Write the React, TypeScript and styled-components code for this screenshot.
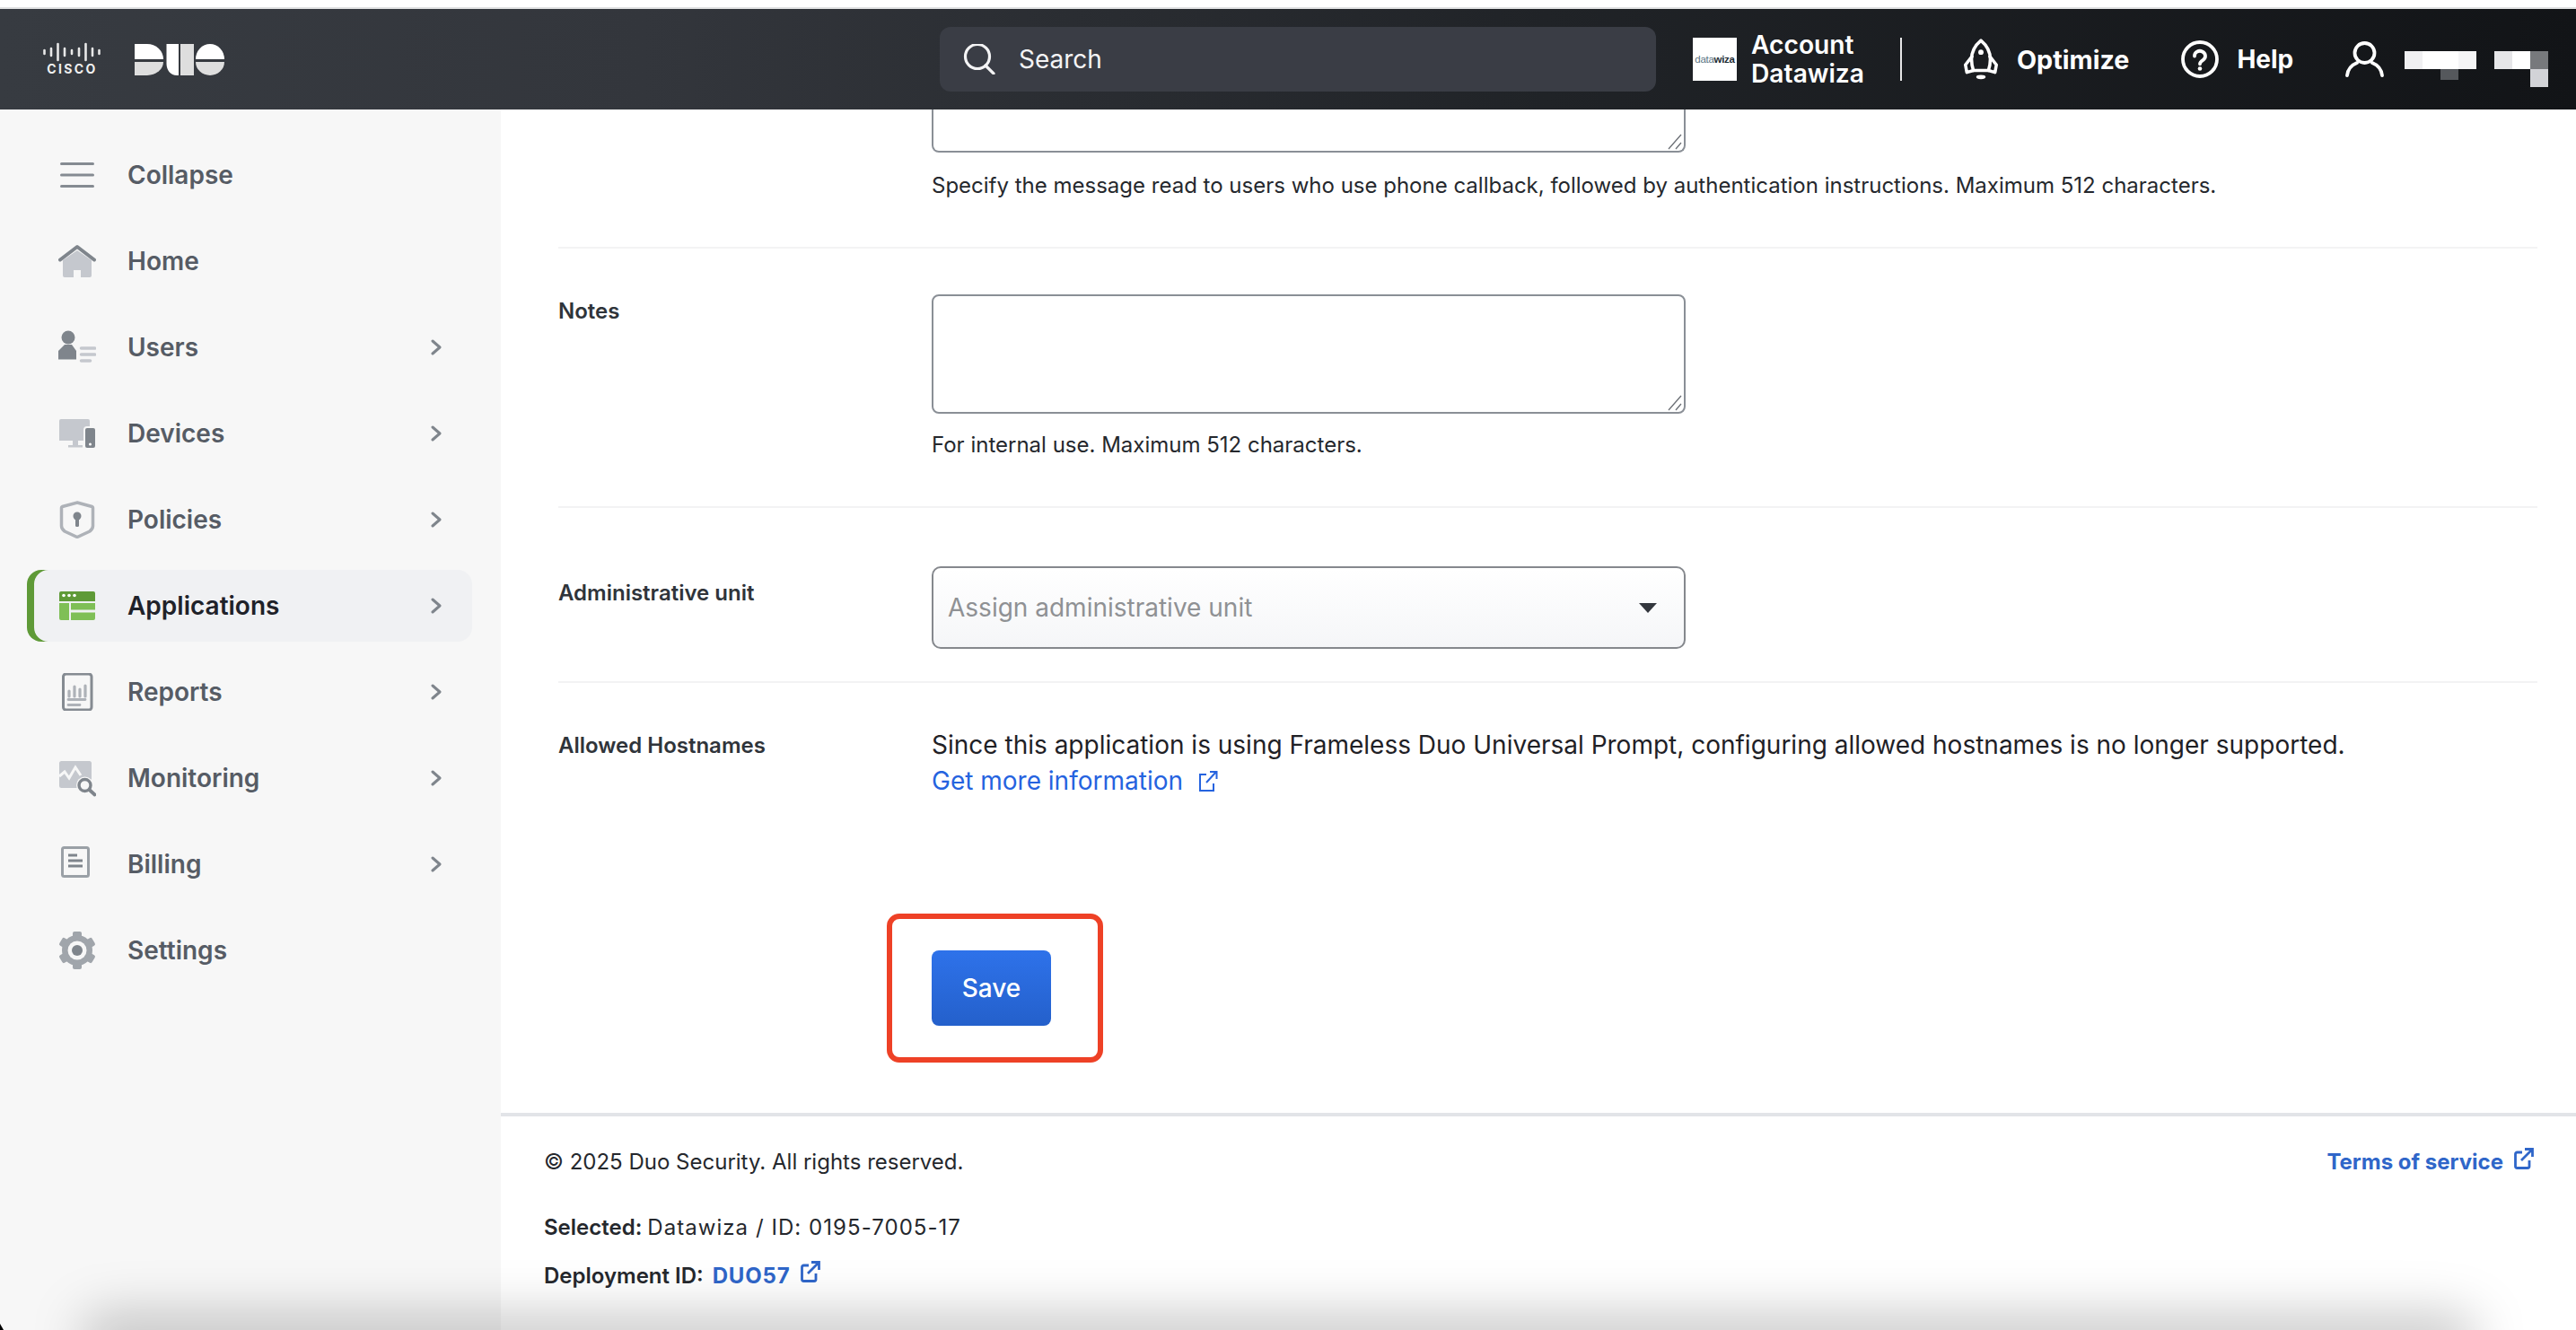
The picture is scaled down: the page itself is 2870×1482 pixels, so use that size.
import React from 'react';
import styled, { createGlobalStyle } from 'styled-components';

const Global = createGlobalStyle`
  html, body { margin: 0; padding: 0; height: 100%; overflow: hidden; background: #fff; }
  body { font-family: Inter, "Liberation Sans", sans-serif; color: #1f2126; }
  * { box-sizing: border-box; }
`;

const Page = styled.div`
  position: relative;
  width: 2870px;
  height: 1482px;
  display: flex;
  flex-direction: column;
  overflow: hidden;
  padding-top: 8px;
  background: #fff;
`;
const TopBar = styled.header`
  height: 114px;
  flex: none;
  border-top: 2px solid #e0e1e2;
  background: linear-gradient(90deg, #373b41 0%, #33363c 25%, #202327 60%, #121417 100%);
  display: flex;
  align-items: center;
  color: #fff;
`;
const Brand = styled.div`
  width: 1047px;
  flex: none;
  padding-left: 48px;
  display: flex;
  align-items: center;
  gap: 38px;
`;
const SearchBox = styled.div`
  width: 798px;
  height: 72px;
  flex: none;
  background: #3a3d45;
  border-radius: 12px;
  display: flex;
  align-items: center;
  padding-left: 26px;
  gap: 26px;
  font-size: 28px;
  color: #f4f4f5;
`;
const AccountLogo = styled.div`
  width: 49px;
  height: 48px;
  margin-left: 41px;
  flex: none;
  background: #fff;
  display: flex;
  align-items: center;
  justify-content: center;
  overflow: hidden;
  font-size: 11.5px;
  font-family: "Liberation Sans", sans-serif;
  letter-spacing: -0.3px;
  color: #5b7484;
  b { color: #1c2b33; }
`;
const AccountName = styled.div`
  margin-left: 16px;
  width: 168px;
  height: 48px;
  flex: none;
  display: flex;
  align-items: center;
  border-right: 2px solid #e8e8e8;
  font-size: 28.2px;
  font-weight: 600;
  line-height: 32px;
`;
const TopLink = styled.div<{ $ml: number; $gap: number; $size?: number }>`
  margin-left: ${p => p.$ml}px;
  display: flex;
  align-items: center;
  gap: ${p => p.$gap}px;
  font-size: ${p => p.$size ?? 28}px;
  font-weight: 700;
  flex: none;
`;
const Mosaic = styled.svg`
  margin-left: 23px;
  margin-top: 22px;
  flex: none;
`;
const Body = styled.div`
  flex: 1;
  min-height: 0;
  display: flex;
`;
const Sidebar = styled.nav`
  width: 558px;
  flex: none;
  background: #f7f7f7;
  padding: 33px 32px 0 30px;
  display: flex;
  flex-direction: column;
  gap: 16px;
`;
const NavItem = styled.div<{ $active?: boolean }>`
  height: 80px;
  border-radius: 16px;
  display: flex;
  align-items: center;
  padding: 0 34px 0 35px;
  gap: 35px;
  font-size: 28px;
  font-weight: 600;
  color: ${p => (p.$active ? '#1f2229' : '#565c65')};
  background: ${p => (p.$active ? '#f0f1f3' : 'transparent')};
  box-shadow: ${p => (p.$active ? 'inset 8px 0 0 #5f9a37' : 'none')};
`;
const NavIcon = styled.svg`
  flex: none;
  width: 42px;
  height: 42px;
`;
const Chevron = styled.svg`
  margin-left: auto;
  flex: none;
`;
const Main = styled.main`
  flex: 1;
  min-width: 0;
  display: flex;
  flex-direction: column;
`;
const Form = styled.div`
  flex: 1;
  padding: 0 43px 0 64px;
`;
const Row = styled.section<{ $top: number; $bottom: number; $last?: boolean }>`
  display: grid;
  grid-template-columns: 416px 840px;
  padding: ${p => p.$top}px 0 ${p => p.$bottom}px;
  border-bottom: ${p => (p.$last ? 'none' : '2px solid #f3f3f4')};
`;
const Label = styled.div<{ $top: number }>`
  padding-top: ${p => p.$top}px;
  font-size: 24px;
  line-height: 32px;
  font-weight: 600;
  color: #2f343a;
`;
const FieldWrap = styled.div`
  position: relative;
  display: flex;
`;
const TextBox = styled.textarea<{ $h: number; $cut?: boolean }>`
  display: block;
  width: 840px;
  height: ${p => p.$h}px;
  resize: none;
  outline: none;
  background: #fff;
  border: 2px solid #8a8f96;
  border-top: ${p => (p.$cut ? 'none' : '2px solid #8a8f96')};
  border-radius: ${p => (p.$cut ? '0 0 8px 8px' : '8px')};
`;
const Grip = styled.svg`
  position: absolute;
  right: 3px;
  bottom: 3px;
`;
const Help = styled.p<{ $top: number }>`
  margin: ${p => p.$top}px 0 0;
  font-size: 24px;
  line-height: 32px;
  color: #25282d;
  white-space: nowrap;
`;
const SelectBox = styled.div`
  width: 840px;
  height: 92px;
  border: 2px solid #85888d;
  border-radius: 10px;
  background: linear-gradient(180deg, #fff 0%, #f5f6f8 100%);
  display: flex;
  align-items: center;
  justify-content: space-between;
  padding: 0 30px 0 16px;
  font-size: 28px;
  color: #8f9194;
`;
const Caret = styled.span`
  width: 0;
  height: 0;
  border-left: 10px solid transparent;
  border-right: 10px solid transparent;
  border-top: 11px solid #33373d;
`;
const BodyText = styled.p`
  margin: 0;
  font-size: 28px;
  line-height: 40px;
  color: #1f2126;
  white-space: nowrap;
`;
const InfoLink = styled.a`
  display: flex;
  align-items: center;
  gap: 17px;
  font-size: 28px;
  line-height: 40px;
  color: #2563df;
`;
const SaveWrap = styled.div`
  position: relative;
  margin: 169px 0 95px 416px;
  width: 133px;
  height: 84px;
`;
const SaveButton = styled.button`
  width: 133px;
  height: 84px;
  border: none;
  border-radius: 8px;
  background: linear-gradient(180deg, #2e72ea 0%, #2460cb 100%);
  color: #fff;
  font: 500 28px Inter, sans-serif;
`;
const Highlight = styled.div`
  position: absolute;
  top: -41px;
  bottom: -41px;
  left: -50px;
  right: -58px;
  border: 6px solid #ee4126;
  border-radius: 14px;
  pointer-events: none;
`;
const Footer = styled.footer`
  flex: none;
  border-top: 4px solid #e2e4e8;
  padding: 0 47px 0 48px;
  height: 242px;
`;
const FooterTop = styled.div`
  height: 104px;
  padding-top: 35px;
  display: flex;
  justify-content: space-between;
  align-items: flex-start;
  font-size: 24px;
  line-height: 32px;
  color: #25282d;
`;
const FooterLine = styled.div<{ $h: number }>`
  height: ${p => p.$h}px;
  display: flex;
  align-items: center;
  font-size: 24px;
  color: #25282d;
  b { font-weight: 600; margin-right: 6px; }
`;
const Mono = styled.span`
  letter-spacing: 1.05px;
`;
const BlueLink = styled.a<{ $ml?: number; $track?: number }>`
  display: flex;
  align-items: center;
  gap: 12px;
  margin-left: ${p => p.$ml ?? 0}px;
  color: #2f66c9;
  font-weight: 700;
  font-size: 24px;
  letter-spacing: ${p => p.$track ?? 0}px;
`;
const RaiseIcon = styled.svg`
  margin-top: -8px;
`;
const BottomShadow = styled.div`
  position: absolute;
  left: 90px;
  right: 110px;
  bottom: -38px;
  height: 56px;
  border-radius: 40px;
  background: rgba(0, 0, 0, 0.22);
  filter: blur(28px);
  pointer-events: none;
`;
const CornerMark = styled.div`
  position: absolute;
  left: 0;
  bottom: 0;
  width: 4px;
  height: 7px;
  background: #000;
  clip-path: polygon(0 0, 100% 100%, 0 100%);
`;

const G1 = '#7f858c';
const G2 = '#c5c8ce';
const G3 = '#aeb2b8';

const Ext = ({ c = '#2f66c9', sw = 2.8 }: { c?: string; sw?: number }) => (
  <RaiseIcon width="22" height="24" viewBox="0 0 22 24" fill="none" stroke={c} strokeWidth={sw}>
    <path d="M9 5H3.5A2 2 0 0 0 1.5 7v13.5a2 2 0 0 0 2 2H15a2 2 0 0 0 2-2V14" />
    <path d="M8 14L20 2M12 1.5h8.5V10" />
  </RaiseIcon>
);

const icons: Record<string, React.ReactNode> = {
  Collapse: (
    <g stroke="#858b92" strokeWidth="3" strokeLinecap="round">
      <path d="M3.5 8.5h35M3.5 21h35M3.5 33.5h35" />
    </g>
  ),
  Home: (
    <>
      <path d="M5 20L21 9l16 11v17a2 2 0 0 1-2 2h-10v-8h-8v8H7a2 2 0 0 1-2-2z" fill={G2} />
      <path d="M2 19.500L21 5l19 14.500" fill="none" stroke={G1} strokeWidth="4" strokeLinecap="round" strokeLinejoin="round" />
    </>
  ),
  Users: (
    <>
      <circle cx="11" cy="10" r="7.500" fill={G1} />
      <path d="M7 18h8l5 7v9.500H0V25z" fill={G1} />
      <path d="M25.500 22h15M25.500 29h15M25.500 36h10" stroke={G2} strokeWidth="3.600" strokeLinecap="round" />
    </>
  ),
  Devices: (
    <>
      <path d="M1 7a2 2 0 0 1 2-2h30a2 2 0 0 1 2 2v22H1z" fill={G2} />
      <path d="M16 29h6v5h5v2.500H11V34h5z" fill={G2} />
      <rect x="29" y="14" width="13" height="24" rx="3" fill={G1} stroke="#f7f7f7" strokeWidth="2" />
      <circle cx="35.500" cy="33" r="1.500" fill="#fff" />
    </>
  ),
  Policies: (
    <>
      <path d="M21 2l16.500 4.500a1.500 1.500 0 0 1 1 1.500v20c0 3-1.500 4.500-3.500 6l-14 6.500L7 34c-2-1.500-3.500-3-3.500-6V8a1.500 1.500 0 0 1 1-1.500z" fill="none" stroke={G3} strokeWidth="3.500" />
      <circle cx="21" cy="17" r="4.500" fill={G1} />
      <rect x="19" y="18" width="4" height="11" rx="1.500" fill={G1} />
    </>
  ),
  Applications: (
    <>
      <path d="M1 7a2 2 0 0 1 2-2h36a2 2 0 0 1 2 2v9H1z" fill="#5f9a37" />
      <circle cx="6" cy="9.500" r="1.800" fill="#fff" />
      <circle cx="12" cy="9.500" r="1.800" fill="#fff" />
      <circle cx="18" cy="9.500" r="1.800" fill="#fff" />
      <path d="M1 18h11v19H3a2 2 0 0 1-2-2z" fill="#7fbf56" />
      <path d="M14 18h27v7.500H14z" fill="#7fbf56" />
      <path d="M14 28.500h27V35a2 2 0 0 1-2 2H14z" fill="#7fbf56" />
    </>
  ),
  Reports: (
    <>
      <rect x="5.500" y="1" width="31.500" height="40" rx="3" fill="none" stroke="#858b92" strokeWidth="3" />
      <path d="M12 20v6M18 15v11M24 18v8M30 14v12" stroke={G3} strokeWidth="3.200" strokeLinecap="round" />
      <path d="M11 29.500h19M11 35.500h13" stroke={G3} strokeWidth="2.800" strokeLinecap="round" />
    </>
  ),
  Monitoring: (
    <>
      <rect x="1" y="2" width="36" height="30" rx="2.500" fill={G2} />
      <path d="M1 19l6-5 5 7 7-12 6 9" fill="none" stroke="#f7f7f7" strokeWidth="3" />
      <circle cx="29.500" cy="29" r="9.500" fill="#f7f7f7" />
      <circle cx="29.500" cy="29" r="6.500" fill="none" stroke={G1} strokeWidth="3.400" />
      <path d="M34.500 34l6 5.500" stroke={G1} strokeWidth="3.800" strokeLinecap="round" />
    </>
  ),
  Billing: (
    <>
      <rect x="4.500" y="2.500" width="29" height="32" rx="2" fill="none" stroke="#9aa0a6" strokeWidth="3" />
      <path d="M11 11h10M11 17h16M11 23h16" stroke={G1} strokeWidth="2.800" />
    </>
  ),
  Settings: (
    <>
      <g fill="#a0a5ab">
        <circle cx="21" cy="21" r="17" />
        {[0, 60, 120, 180, 240, 300].map(a => (
          <rect key={a} x="16" y="0" width="10" height="10" rx="2" transform={`rotate(${a} 21 21)`} />
        ))}
      </g>
      <circle cx="21" cy="21" r="10.500" fill="#f7f7f7" />
      <circle cx="21" cy="21" r="6" fill={G1} />
    </>
  ),
};

const nav = [
  ['Collapse', false],
  ['Home', false],
  ['Users', true],
  ['Devices', true],
  ['Policies', true],
  ['Applications', true],
  ['Reports', true],
  ['Monitoring', true],
  ['Billing', true],
  ['Settings', false],
] as const;

export default function App() {
  return (
    <>
      <Global />
      <Page>
        <TopBar>
          <Brand>
            <svg width="64" height="38" viewBox="0 0 64 38">
              <path
                d="M1.500 9v4M9 7v8M16.500 2v18M24 7v8M32 9v4M40 7v8M47.500 2v18M55 7v8M62.500 9v4"
                stroke="#e8e8e8"
                strokeWidth="2.600"
                strokeLinecap="round"
              />
              <text x="32.500" y="35" textAnchor="middle" fontFamily="Inter, sans-serif" fontWeight="700" fontSize="14" letterSpacing="2.400" fill="#f0f0f0">CISCO</text>
            </svg>
            <svg width="100" height="35" viewBox="0 0 100 35">
              <path d="M0 0h14a18 17 0 0 1 18 17H0z" fill="#fff" />
              <path d="M0 20h32a18 15 0 0 1-18 15H0z" fill="#dedede" />
              <path d="M35.500 0H49v35h-2c-7 0-11.500-6-11.500-13z" fill="#fff" />
              <path d="M51 0h15v35H51z" fill="#dedede" />
              <path d="M68 17a16 17 0 0 1 32 0z" fill="#fff" />
              <path d="M68 20h32a16 15 0 0 1-32 0z" fill="#dedede" />
            </svg>
          </Brand>
          <SearchBox>
            <svg width="36" height="34" viewBox="0 0 36 34" fill="none" stroke="#f4f4f5" strokeWidth="3.200">
              <circle cx="16" cy="14" r="13.500" />
              <path d="M25 24l9 9" strokeLinecap="round" />
            </svg>
            Search
          </SearchBox>
          <AccountLogo>
            data<b>wiza</b>
          </AccountLogo>
          <AccountName>
            Account
            <br />
            Datawiza
          </AccountName>
          <TopLink $ml={68} $gap={20} $size={28.7}>
            <svg width="40" height="46" viewBox="0 0 38 44" fill="none" stroke="#fff" strokeWidth="3.400" strokeLinejoin="round" strokeLinecap="round">
              <path d="M19 2C25 7 29 14 29 22c0 5-1 9-2 12H11c-1-3-2-7-2-12C9 14 13 7 19 2z" />
              <path d="M9.500 19L2.500 28l1.500 8 7-2M28.500 19l7 9-1.500 8-7-2" />
              <circle cx="19" cy="14.500" r="2.800" fill="#fff" stroke="none" />
              <ellipse cx="19" cy="41" rx="5" ry="2.300" fill="#fff" stroke="none" />
            </svg>
            Optimize
          </TopLink>
          <TopLink $ml={58} $gap={20}>
            <svg width="42" height="42" viewBox="0 0 42 42" fill="none" stroke="#fff" strokeWidth="3.800">
              <circle cx="21" cy="21" r="19" />
              <path d="M15 17.500a6 5.500 0 1 1 9.500 4.300c-2 1.300-3.500 2.400-3.500 4.500" strokeLinecap="round" />
              <circle cx="21" cy="31.500" r="2.300" fill="#fff" stroke="none" />
            </svg>
            Help
          </TopLink>
          <TopLink $ml={58} $gap={0}>
            <svg width="43" height="40" viewBox="0 0 43 40" fill="none" stroke="#fff" strokeWidth="3.800" strokeLinecap="round">
              <circle cx="21.500" cy="13" r="11" />
              <path d="M2 38c1-8 6-12 11-14M41 38c-1-8-6-12-11-14" />
            </svg>
            <Mosaic width="160" height="40" viewBox="0 0 160 40">
              <rect x="0" y="0" width="20" height="20" fill="#f0f0f2" />
              <rect x="20" y="0" width="40" height="20" fill="#fff" />
              <rect x="60" y="0" width="20" height="20" fill="#f5f5f6" />
              <rect x="40" y="20" width="20" height="12" fill="#55585c" />
              <rect x="100" y="0" width="20" height="20" fill="#e6e6e8" />
              <rect x="120" y="0" width="20" height="20" fill="#fff" />
              <rect x="140" y="0" width="20" height="20" fill="#77797c" />
              <rect x="140" y="20" width="20" height="20" fill="#d2d3d7" />
            </Mosaic>
          </TopLink>
        </TopBar>
        <Body>
          <Sidebar>
            {nav.map(([name, more]) => (
              <NavItem key={name} $active={name === 'Applications'}>
                <NavIcon viewBox="0 0 42 42">{icons[name]}</NavIcon>
                {name}
                {more && (
                  <Chevron width="12" height="18" viewBox="0 0 12 18" fill="none" stroke="#7f858c" strokeWidth="3" strokeLinecap="round" strokeLinejoin="round">
                    <path d="M2 2l8 7-8 7" />
                  </Chevron>
                )}
              </NavItem>
            ))}
          </Sidebar>
          <Main>
            <Form>
              <Row $top={0} $bottom={52}>
                <div />
                <div>
                  <FieldWrap>
                    <TextBox $h={48} $cut aria-label="Callback message" />
                    <Grip width="18" height="18" viewBox="0 0 18 18" stroke="#6b6f75" strokeWidth="1.300">
                      <path d="M2 17L16 1M10 17l6-7" />
                    </Grip>
                  </FieldWrap>
                  <Help $top={21}>Specify the message read to users who use phone callback, followed by authentication instructions. Maximum 512 characters.</Help>
                </div>
              </Row>
              <Row $top={51} $bottom={52}>
                <Label $top={3}>Notes</Label>
                <div>
                  <FieldWrap>
                    <TextBox $h={133} aria-label="Notes" />
                    <Grip width="18" height="18" viewBox="0 0 18 18" stroke="#6b6f75" strokeWidth="1.300">
                      <path d="M2 17L16 1M10 17l6-7" />
                    </Grip>
                  </FieldWrap>
                  <Help $top={19}>For internal use. Maximum 512 characters.</Help>
                </div>
              </Row>
              <Row $top={65} $bottom={36}>
                <Label $top={14}>Administrative unit</Label>
                <SelectBox>
                  Assign administrative unit
                  <Caret />
                </SelectBox>
              </Row>
              <Row $top={49} $bottom={0} $last>
                <Label $top={5}>Allowed Hostnames</Label>
                <div>
                  <BodyText>Since this application is using Frameless Duo Universal Prompt, configuring allowed hostnames is no longer supported.</BodyText>
                  <InfoLink>
                    Get more information
                    <svg width="22" height="24" viewBox="0 0 22 24" fill="none" stroke="#2563df" strokeWidth="2">
                      <path d="M9 5H2v18h15v-8" />
                      <path d="M9 14L20 2M13 2h7.500v8" />
                    </svg>
                  </InfoLink>
                </div>
              </Row>
              <SaveWrap>
                <SaveButton>Save</SaveButton>
                <Highlight />
              </SaveWrap>
            </Form>
            <Footer>
              <FooterTop>
                © 2025 Duo Security. All rights reserved.
                <BlueLink>
                  Terms of service
                  <Ext />
                </BlueLink>
              </FooterTop>
              <FooterLine $h={39}>
                <b>Selected:</b>
                <Mono>Datawiza / ID: 0195-7005-17</Mono>
              </FooterLine>
              <FooterLine $h={68}>
                <b>Deployment ID:</b>
                <BlueLink $ml={4} $track={0.8}>
                  DUO57
                  <Ext />
                </BlueLink>
              </FooterLine>
            </Footer>
          </Main>
        </Body>
        <BottomShadow />
        <CornerMark />
      </Page>
    </>
  );
}
